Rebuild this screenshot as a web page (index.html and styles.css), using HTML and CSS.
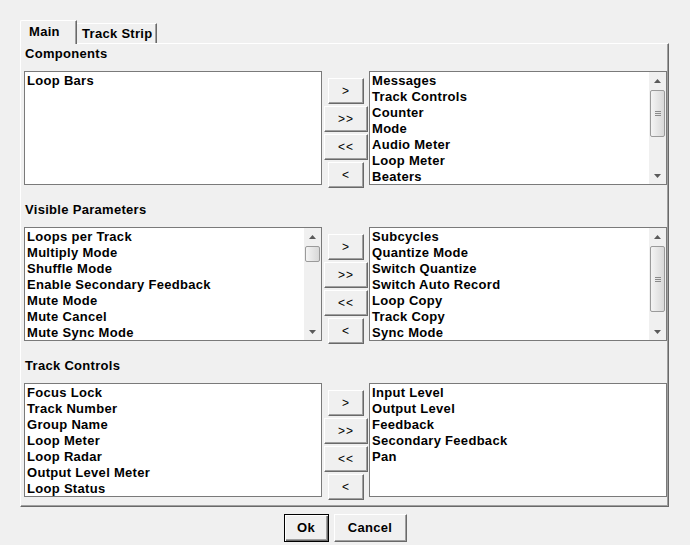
FILE: index.html
```html
<!DOCTYPE html>
<html>
<head>
<meta charset="utf-8">
<link rel="stylesheet" href="styles.css">
</head>
<body>
<div class="dialog">
  <div class="tabs">
    <div class="tab active">Main</div>
    <div class="tab">Track Strip</div>
  </div>
  <div class="panel">
    <section class="group">
      <div class="label">Components</div>
      <div class="row">
        <div class="list">
          <div class="items">
            <div>Loop Bars</div>
          </div>
        </div>
        <div class="movers">
          <button class="btn mv">&gt;</button>
          <button class="btn mv wide">&gt;&gt;</button>
          <button class="btn mv wide">&lt;&lt;</button>
          <button class="btn mv">&lt;</button>
        </div>
        <div class="list">
          <div class="items">
            <div>Messages</div>
            <div>Track Controls</div>
            <div>Counter</div>
            <div>Mode</div>
            <div>Audio Meter</div>
            <div>Loop Meter</div>
            <div>Beaters</div>
          </div>
          <div class="sb">
            <div class="arrow"><svg width="7" height="4" viewBox="0 0 7 4"><polygon points="3.5,0 7,4 0,4" fill="#5a5a5a"/></svg></div>
            <div class="track"><div class="thumb t1"><i></i><i></i><i></i></div></div>
            <div class="arrow"><svg width="7" height="4" viewBox="0 0 7 4"><polygon points="0,0 7,0 3.5,4" fill="#5a5a5a"/></svg></div>
          </div>
        </div>
      </div>
    </section>

    <section class="group">
      <div class="label">Visible Parameters</div>
      <div class="row">
        <div class="list">
          <div class="items">
            <div>Loops per Track</div>
            <div>Multiply Mode</div>
            <div>Shuffle Mode</div>
            <div>Enable Secondary Feedback</div>
            <div>Mute Mode</div>
            <div>Mute Cancel</div>
            <div>Mute Sync Mode</div>
          </div>
          <div class="sb">
            <div class="arrow"><svg width="7" height="4" viewBox="0 0 7 4"><polygon points="3.5,0 7,4 0,4" fill="#5a5a5a"/></svg></div>
            <div class="track"><div class="thumb t2"></div></div>
            <div class="arrow"><svg width="7" height="4" viewBox="0 0 7 4"><polygon points="0,0 7,0 3.5,4" fill="#5a5a5a"/></svg></div>
          </div>
        </div>
        <div class="movers">
          <button class="btn mv">&gt;</button>
          <button class="btn mv wide">&gt;&gt;</button>
          <button class="btn mv wide">&lt;&lt;</button>
          <button class="btn mv">&lt;</button>
        </div>
        <div class="list">
          <div class="items">
            <div>Subcycles</div>
            <div>Quantize Mode</div>
            <div>Switch Quantize</div>
            <div>Switch Auto Record</div>
            <div>Loop Copy</div>
            <div>Track Copy</div>
            <div>Sync Mode</div>
          </div>
          <div class="sb">
            <div class="arrow"><svg width="7" height="4" viewBox="0 0 7 4"><polygon points="3.5,0 7,4 0,4" fill="#5a5a5a"/></svg></div>
            <div class="track"><div class="thumb t3"><i></i><i></i><i></i></div></div>
            <div class="arrow"><svg width="7" height="4" viewBox="0 0 7 4"><polygon points="0,0 7,0 3.5,4" fill="#5a5a5a"/></svg></div>
          </div>
        </div>
      </div>
    </section>

    <section class="group">
      <div class="label">Track Controls</div>
      <div class="row">
        <div class="list">
          <div class="items">
            <div>Focus Lock</div>
            <div>Track Number</div>
            <div>Group Name</div>
            <div>Loop Meter</div>
            <div>Loop Radar</div>
            <div>Output Level Meter</div>
            <div>Loop Status</div>
          </div>
        </div>
        <div class="movers">
          <button class="btn mv">&gt;</button>
          <button class="btn mv wide">&gt;&gt;</button>
          <button class="btn mv wide">&lt;&lt;</button>
          <button class="btn mv">&lt;</button>
        </div>
        <div class="list">
          <div class="items">
            <div>Input Level</div>
            <div>Output Level</div>
            <div>Feedback</div>
            <div>Secondary Feedback</div>
            <div>Pan</div>
          </div>
        </div>
      </div>
    </section>
  </div>
  <div class="footer">
    <button class="btn ok">Ok</button>
    <button class="btn cancel">Cancel</button>
  </div>
</div>
</body>
</html>
```

FILE: styles.css
```css
html, body {
  margin: 0;
  padding: 0;
  background: #f0f0f0;
}
body {
  font: bold 13px "Liberation Sans", Arial, sans-serif;
  letter-spacing: 0.3px;
  color: #000;
}
.dialog {
  width: 690px;
  height: 545px;
  padding-top: 20px;
  box-sizing: border-box;
}
.tabs {
  display: flex;
  align-items: flex-end;
  height: 23px;
  margin-left: 20px;
}
.tab {
  box-sizing: border-box;
  background: #f0f0f0;
  border-top: 1px solid #fff;
  border-right: 1px solid #696969;
  box-shadow: inset -1px 0 #a0a0a0;
  line-height: 16px;
  white-space: nowrap;
}
.tab.active {
  position: relative;
  z-index: 1;
  width: 57px;
  height: 24px;
  margin-bottom: -1px;
  border-left: 1px solid #fff;
  border-top-left-radius: 2px;
  padding: 3px 0 0 8px;
}
.tab:not(.active) {
  width: 80px;
  height: 20px;
  padding: 2px 0 0 5px;
}
.panel {
  box-sizing: border-box;
  width: 649px;
  height: 464px;
  margin-left: 20px;
  border-left: 1px solid #fff;
  border-top: 1px solid #fff;
  border-right: 1px solid #696969;
  border-bottom: 1px solid #696969;
  box-shadow: inset -1px -1px #a0a0a0;
  padding: 1px 1px 0 3px;
}
.group + .group {
  margin-top: 16px;
}
.label {
  line-height: 16px;
  padding: 1px 0 0 1px;
  height: 16px;
  box-sizing: border-box;
  overflow: visible;
}
.row {
  margin-top: 10px;
  display: grid;
  grid-template-columns: 298px 47px 298px;
  height: 114px;
}
.list {
  box-sizing: border-box;
  border: 1px solid #7a7a7a;
  background: #fff;
  display: flex;
  height: 114px;
  overflow: hidden;
}
.items {
  flex: 1;
  padding: 1px 0 0 2px;
  line-height: 16px;
  white-space: nowrap;
  overflow: hidden;
}
.sb {
  width: 17px;
  display: flex;
  flex-direction: column;
  background: #f0f0f0;
}
.arrow {
  height: 17px;
  display: flex;
  align-items: center;
  justify-content: center;
}
.arrow svg {
  display: block;
}
.track {
  flex: 1;
  display: flex;
  flex-direction: column;
  align-items: center;
}
.thumb {
  box-sizing: border-box;
  width: 15px;
  margin-top: 1px;
  border: 1px solid #9a9a9a;
  border-radius: 2px;
  background: linear-gradient(to right, #f4f4f4, #e6e6e6 50%, #d8d8d8);
  display: flex;
  flex-direction: column;
  align-items: center;
  justify-content: center;
  gap: 1px;
}
.thumb i {
  display: block;
  width: 6px;
  height: 1px;
  background: #8a8a8a;
}
.t1 { height: 47px; }
.t2 { height: 16px; }
.t3 { height: 66px; }
.movers {
  display: flex;
  flex-direction: column;
  align-items: center;
  gap: 2px;
  padding-top: 7px;
}
.btn {
  box-sizing: border-box;
  font: bold 13px "Liberation Sans", Arial, sans-serif;
  letter-spacing: 0.3px;
  color: #000;
  background: #f0f0f0;
  border: 1px solid;
  border-color: #fff #696969 #696969 #fff;
  box-shadow: inset -1px -1px #a0a0a0;
  padding: 0;
  margin: 0;
}
.mv {
  width: 36px;
  height: 26px;
  font-weight: normal;
  font-size: 12px;
  letter-spacing: 1px;
  padding-left: 1px;
}
.mv.wide {
  width: 44px;
}
.footer {
  display: flex;
  justify-content: center;
  gap: 5px;
  margin-top: 7px;
}
.ok {
  width: 45px;
  height: 28px;
  padding-bottom: 1px;
  border-color: #000;
  box-shadow: inset 1px 1px #fff, inset -1px -1px #696969, inset -2px -2px #a0a0a0;
}
.cancel {
  width: 73px;
  height: 28px;
  padding-bottom: 1px;
}
```
